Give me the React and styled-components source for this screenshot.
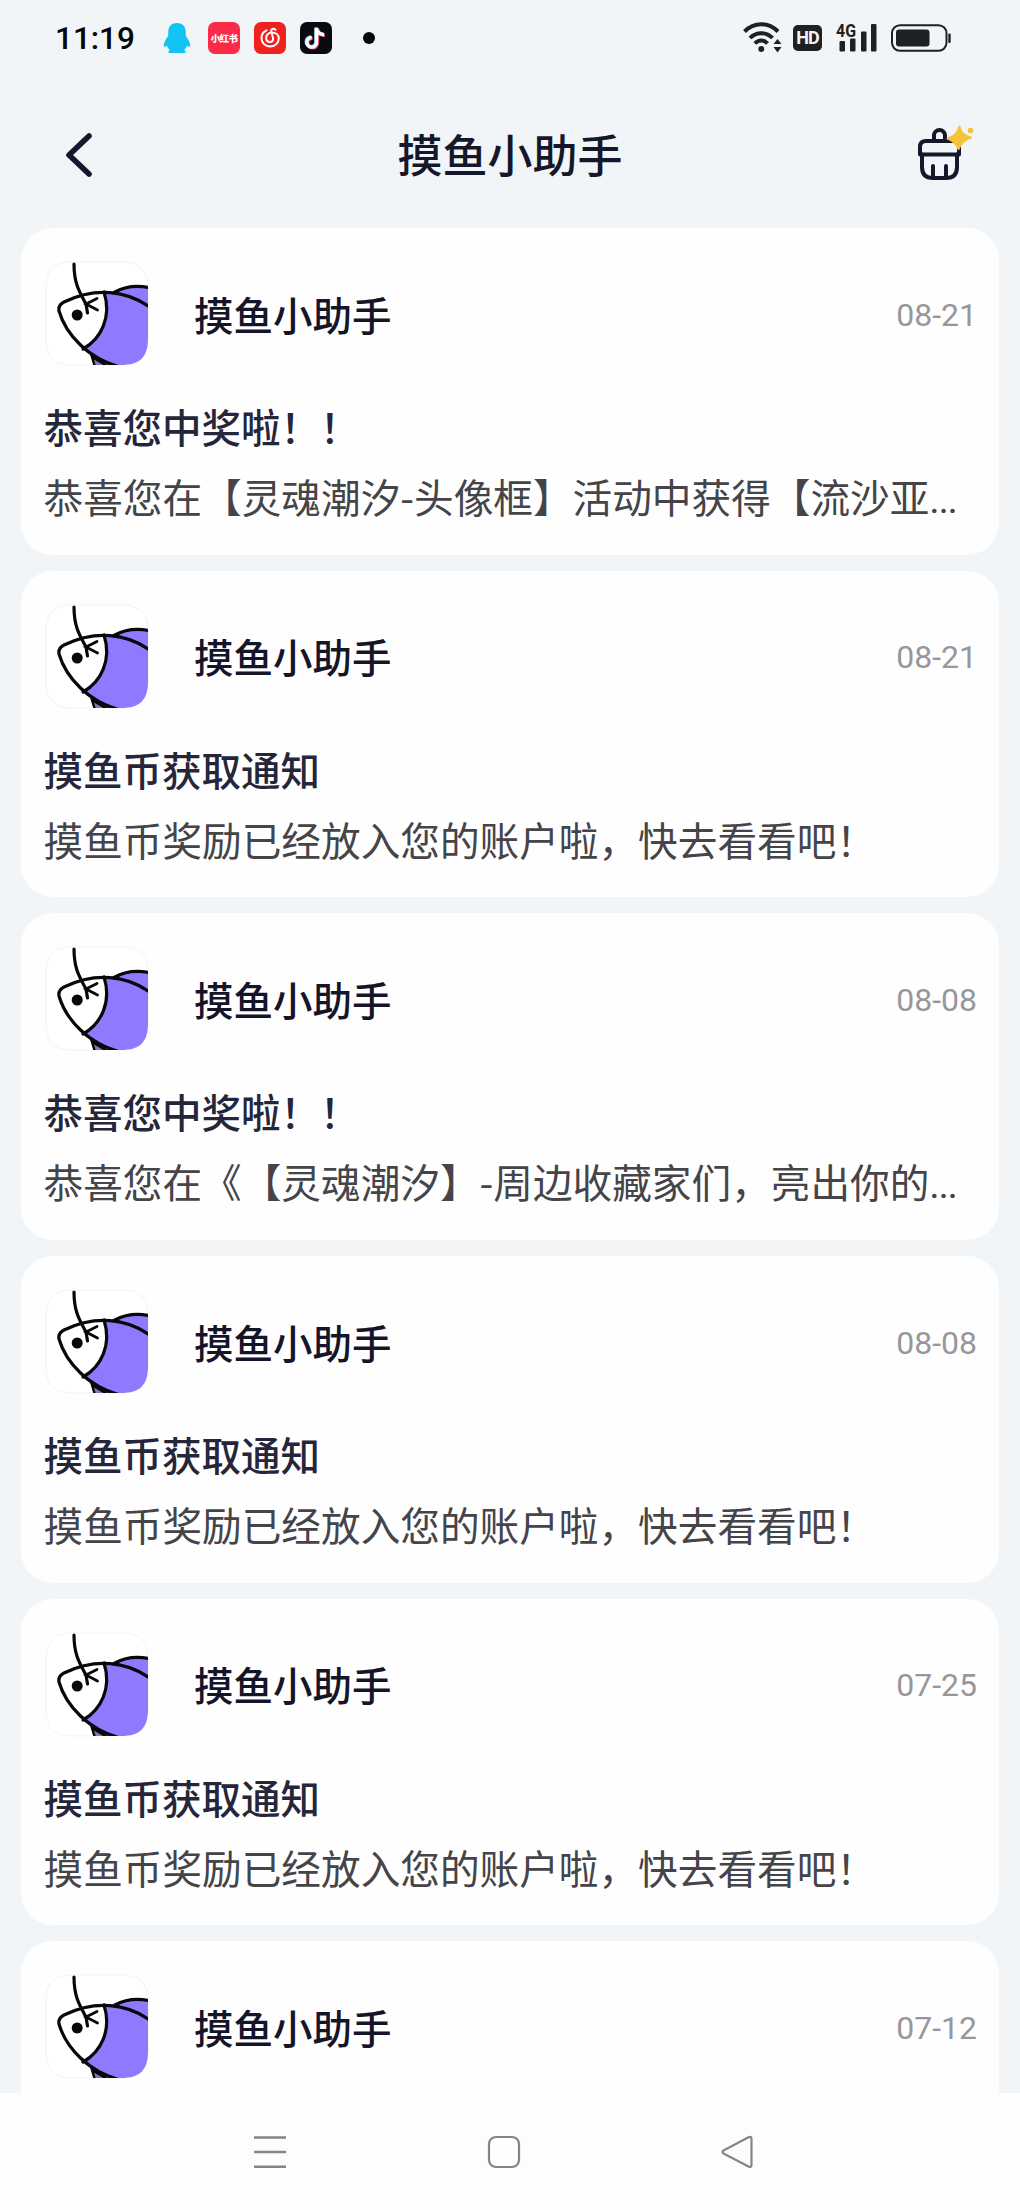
import styled, { createGlobalStyle } from "styled-components";

const GlobalStyle = createGlobalStyle`
  * {
    box-sizing: border-box;
  }

  body {
    margin: 0;
    background: #f1f5f8;
    font-family: "Noto Sans CJK SC", sans-serif;
    text-spacing-trim: space-all;
  }
`

const Screen = styled.div`
  display: flex;
  flex-direction: column;
  width: 1020px;
  height: 2210px;
  overflow: hidden;
  background: #f1f5f8;
`

const StatusBar = styled.div`
  display: flex;
  flex: none;
  justify-content: space-between;
  height: 76px;
  padding: 0 69px 0 55px;
`

const StatusGroup = styled.div`
  display: flex;
  align-items: center;
  gap: ${props => props.gap || "0"};
`

const Clock = styled.span`
  width: 93px;
  font-family: Roboto, sans-serif;
  font-size: 31.5px;
  font-weight: 500;
  line-height: 76px;
  color: #050608;
  padding-top: 2px;
`

const AppBadge = styled.span`
  display: flex;
  align-items: center;
  justify-content: center;
  width: 32px;
  height: 32px;
  border-radius: 7px;
  overflow: hidden;
  background: ${props => props.color};
  color: #fff;
  font-size: 9.5px;
  font-weight: 900;
  letter-spacing: -0.6px;
  white-space: nowrap;
`

const MoreDot = styled.span`
  width: 12px;
  height: 12px;
  margin-left: 17px;
  border-radius: 50%;
  background: #050608;
`

const HdBadge = styled.span`
  width: 29px;
  height: 26px;
  margin: 0 14px 0 10px;
  border-radius: 5px;
  background: #1e2022;
  color: #f1f5f8;
  font-family: Roboto, sans-serif;
  font-size: 18px;
  font-weight: 700;
  line-height: 26px;
  text-align: center;
  letter-spacing: -1px;
`

const NavBar = styled.header`
  display: grid;
  grid-template-columns: 100px 1fr 100px;
  flex: none;
  align-items: center;
  height: 152px;
  padding: 0 24px 0 29px;
`

const NavTitle = styled.h1`
  margin: 0;
  padding: 3px 5px 0 0;
  font-size: 45px;
  font-weight: 500;
  line-height: 60px;
  text-align: center;
  color: #15172a;
`

const IconButton = styled.button`
  display: flex;
  align-items: center;
  justify-content: center;
  height: 90px;
  margin-top: 6px;
  padding: 0;
  border: 0;
  background: none;
`

const MessageList = styled.main`
  display: flex;
  flex: 1;
  flex-direction: column;
  gap: 16.2px;
  min-height: 0;
  padding: 0 21px;
  overflow: hidden;
`

const Card = styled.article`
  flex: none;
  height: 326.5px;
  padding: 33px 22px 0 24px;
  border-radius: 32px;
  background: #fefefe;
`

const CardHead = styled.div`
  display: flex;
  align-items: center;
  height: 105px;
`

const Sender = styled.span`
  flex: 1;
  margin-left: 45px;
  font-size: 39.5px;
  font-weight: 500;
  line-height: 58px;
  color: #15152a;
`

const DateText = styled.time`
  font-family: Roboto, sans-serif;
  font-size: 32px;
  line-height: 40px;
  padding-top: 2px;
  color: #97979b;
`

const CardTitle = styled.h2`
  margin: 30px 0 0 -1.5px;
  font-size: 39.5px;
  font-weight: 500;
  line-height: 60px;
  color: #26263a;
`

const CardText = styled.p`
  margin: 10px 0 0 -1.5px;
  font-size: 39.65px;
  font-weight: 400;
  line-height: 60px;
  white-space: nowrap;
  color: #444449;
`

const Dots = styled.span`
  font-family: Roboto, sans-serif;
  letter-spacing: -1.4px;
`

const SystemBar = styled.nav`
  display: flex;
  flex: none;
  align-items: center;
  justify-content: space-between;
  height: 117px;
  padding: 0 266px 0 253px;
  background: #fdfdfd;
`

const messages = [
  { title: "恭喜您中奖啦！！", text: "恭喜您在【灵魂潮汐-头像框】活动中获得【流沙亚", cut: true, date: "08-21" },
  { title: "摸鱼币获取通知", text: "摸鱼币奖励已经放入您的账户啦，快去看看吧！", date: "08-21" },
  { title: "恭喜您中奖啦！！", text: "恭喜您在《【灵魂潮汐】-周边收藏家们，亮出你的", cut: true, date: "08-08" },
  { title: "摸鱼币获取通知", text: "摸鱼币奖励已经放入您的账户啦，快去看看吧！", date: "08-08" },
  { title: "摸鱼币获取通知", text: "摸鱼币奖励已经放入您的账户啦，快去看看吧！", date: "07-25" },
  { date: "07-12" },
]

function PenguinIcon() {
  return (
    <svg width="31" height="32" viewBox="0 0 31 32">
      <path
        d="M14 1C8 1 5.200 5 5.200 10.500V14C3 17 .8 20.500 .8 23.500C.8 25.500 2.500 25 4 23.500C4.600 25.500 5.600 27 7 28C5 28.800 4.800 31 6.500 31H21.500C23.200 31 23 28.800 21 28C22.400 27 23.400 25.500 24 23.500C25.500 25 27.200 25.500 27.200 23.500C27.200 20.500 25 17 22.800 14V10.500C22.800 5 20 1 14 1Z"
        fill="#12c3f4"
      />
    </svg>
  )
}

function CloudMusicIcon() {
  return (
    <svg width="32" height="32" viewBox="0 0 32 32" fill="none" stroke="#fff" strokeWidth="2" strokeLinecap="round">
      <path d="M12.500 8.300C9 9.800 7.500 12.800 7.500 16C7.500 21 11.500 24.500 16 24.500C21 24.500 24.800 21 24.800 16.500C24.800 12.500 21.500 10.500 18 10.500C14.500 10.500 12.200 13 12.200 16C12.200 18.500 13.800 20 16 20C18.200 20 19.500 18.300 19 16L17.300 9.500C16.800 7 19.500 6 21.500 7.800" />
    </svg>
  )
}

function TiktokIcon() {
  const note = "M16.500 6V20.300A4.800 4.800 0 1 1 11.700 15.500M16.500 6C17 10 20 12.500 24 12.700"
  return (
    <svg width="32" height="32" viewBox="0 0 32 32" fill="none" strokeWidth="3.400">
      <path d={note} stroke="#e8476b" transform="translate(1 .8)" />
      <path d={note} stroke="#5fd6dc" transform="translate(-.7 -.6)" />
      <path d={note} stroke="#fff" />
    </svg>
  )
}

function WifiIcon() {
  return (
    <svg width="40" height="32" viewBox="0 1 40 32" fill="none" stroke="#1e2022" strokeWidth="4">
      <path d="M1.500 10.500C11 .8 25.500 .8 35 10.500" />
      <path d="M7 17C13 10.500 23.500 10.500 29.500 17" />
      <path d="M12 22.500C15.500 18.500 21 18.500 24.500 22.500" />
      <circle cx="18.300" cy="28" r="3" fill="#1e2022" stroke="none" />
      <path d="M34.500 18L38.500 23H30.500ZM34.500 31.500L38.500 26H30.500Z" fill="#1e2022" stroke="none" />
    </svg>
  )
}

function SignalIcon() {
  return (
    <svg width="42" height="32" viewBox="0 2 42 32" fill="#1e2022">
      <text x="0" y="17" fontFamily="Roboto, sans-serif" fontSize="18" fontWeight="700" textLength="20" lengthAdjust="spacingAndGlyphs">4G</text>
      <rect x="3.500" y="21" width="5.500" height="10.500" rx="1" />
      <rect x="14" y="18.500" width="5.500" height="13" rx="1" />
      <rect x="25" y="11.500" width="5.500" height="20" rx="1" />
      <rect x="35" y="4" width="5.500" height="27.500" rx="1" />
    </svg>
  )
}

function BatteryIcon() {
  return (
    <svg width="60" height="28" viewBox="0 0 60 28">
      <rect x="1" y="1.200" width="54.500" height="25.600" rx="8" fill="none" stroke="#1e2022" strokeWidth="2" />
      <rect x="5" y="5.500" width="33.500" height="17" rx="3" fill="#1e2022" />
      <rect x="57.300" y="9.500" width="2.400" height="9.500" rx="1" fill="#1e2022" />
    </svg>
  )
}

function BackIcon() {
  return (
    <svg width="30" height="46" viewBox="0 0 30 46" fill="none" stroke="#15172a" strokeWidth="5.600" strokeLinecap="round" strokeLinejoin="round">
      <path d="M25 4L5 23L25 42" />
    </svg>
  )
}

function CleanIcon() {
  return (
    <svg width="60" height="60" viewBox="0 0 60 60" fill="none" stroke="#15172a" strokeWidth="4" strokeLinecap="round" strokeLinejoin="round">
      <path d="M18 16V10.500A5.500 5.500 0 0 1 29 10.500V16" />
      <path d="M4 29.500V22Q4 16 10 16H37Q43 16 43 22V29.500Z" />
      <path d="M6 29.500V42Q6 53 17 53H30Q41 53 41 42V29.500" />
      <path d="M17 41V52M30 41V52" />
      <path
        d="M43.500 1.500Q45 10 55 12.500Q46 15.500 42.500 24Q40 16.500 31.500 13.500Q41 11 43.500 1.500Z"
        fill="#f6c23a"
        stroke="#f6c23a"
        strokeWidth="2"
      />
      <circle cx="54.500" cy="5.500" r="2.800" fill="#f6c23a" stroke="none" />
    </svg>
  )
}

function FishAvatar() {
  return (
    <svg width="104" height="105" viewBox="0 0 104 105" fill="none" stroke="#08080a" strokeWidth="3.200" strokeLinecap="round">
      <clipPath id="tile">
        <path d="M28 1H76C95 1 103 9 103 28V77C103 96 95 104 76 104H28C9 104 1 96 1 77V28C1 9 9 1 28 1Z" />
      </clipPath>
      <path d="M28 1H76C95 1 103 9 103 28V77C103 96 95 104 76 104H28C9 104 1 96 1 77V28C1 9 9 1 28 1Z" fill="#fff" stroke="#f3f3f5" strokeWidth="1" />
      <g clipPath="url(#tile)">
        <path d="M70 31C81 25 93 24 106 27V50Z" fill="#9179ff" />
        <path d="M59 31C78 31 92 37 106 48V108H74C60 104 49 98 38 88C57 77 67 58 59 31Z" fill="#9179ff" stroke="none" />
        <path d="M47 96L50 106H64Z" fill="#8478b8" strokeWidth="2.400" />
        <path d="M106 47C82 29 50 26 19 41Q13 44 14 50C21 74 44 98 75 106" />
        <path d="M59 31C67 56 56 78 38 88" />
        <path d="M29 3C29 22 34 30 41 43L42.500 52" />
        <path d="M52 37.500L41 43L52.500 49" strokeWidth="2.800" />
        <circle cx="32.200" cy="54" r="5.500" fill="#08080a" stroke="none" />
      </g>
    </svg>
  )
}

function Message({ title, text, cut, date }) {
  return (
    <Card>
      <CardHead>
        <FishAvatar />
        <Sender>摸鱼小助手</Sender>
        <DateText>{date}</DateText>
      </CardHead>
      {title && <CardTitle>{title}</CardTitle>}
      {text && (
        <CardText>
          {text}
          {cut && <Dots>...</Dots>}
        </CardText>
      )}
    </Card>
  )
}

function App() {
  return (
    <Screen>
      <GlobalStyle />

      <StatusBar>
        <StatusGroup gap="15px">
          <Clock>11:19</Clock>
          <StatusGroup gap="14px">
            <PenguinIcon />
            <AppBadge color="#fb2b48">小红书</AppBadge>
            <AppBadge color="#f0221f"><CloudMusicIcon /></AppBadge>
            <AppBadge color="#0a0912"><TiktokIcon /></AppBadge>
            <MoreDot />
          </StatusGroup>
        </StatusGroup>
        <StatusGroup>
          <WifiIcon />
          <HdBadge>HD</HdBadge>
          <SignalIcon />
          <StatusGroup gap="13px">
            <span />
            <BatteryIcon />
          </StatusGroup>
        </StatusGroup>
      </StatusBar>

      <NavBar>
        <IconButton aria-label="返回"><BackIcon /></IconButton>
        <NavTitle>摸鱼小助手</NavTitle>
        <IconButton aria-label="清除未读"><CleanIcon /></IconButton>
      </NavBar>

      <MessageList>
        {messages.map((message, index) => (
          <Message key={index} {...message} />
        ))}
      </MessageList>

      <SystemBar>
        <svg width="34" height="34" viewBox="0 0 34 34" stroke="#858585" strokeWidth="2.400">
          <path d="M1 2.500H33M1 17H33M1 31.700H33" />
        </svg>
        <svg width="34" height="34" viewBox="0 0 34 34" fill="none" stroke="#858585" strokeWidth="2.200">
          <rect x="2" y="2" width="30" height="30" rx="7" />
        </svg>
        <svg width="34" height="34" viewBox="0 0 34 34" fill="none" stroke="#858585" strokeWidth="2.200" strokeLinejoin="round">
          <path d="M28.500 2.300Q31.500 1 31.500 4V30Q31.500 33 28.500 31.500L3.500 18.500Q1.500 17 3.500 15.500Z" />
        </svg>
      </SystemBar>
    </Screen>
  )
}

export default App
